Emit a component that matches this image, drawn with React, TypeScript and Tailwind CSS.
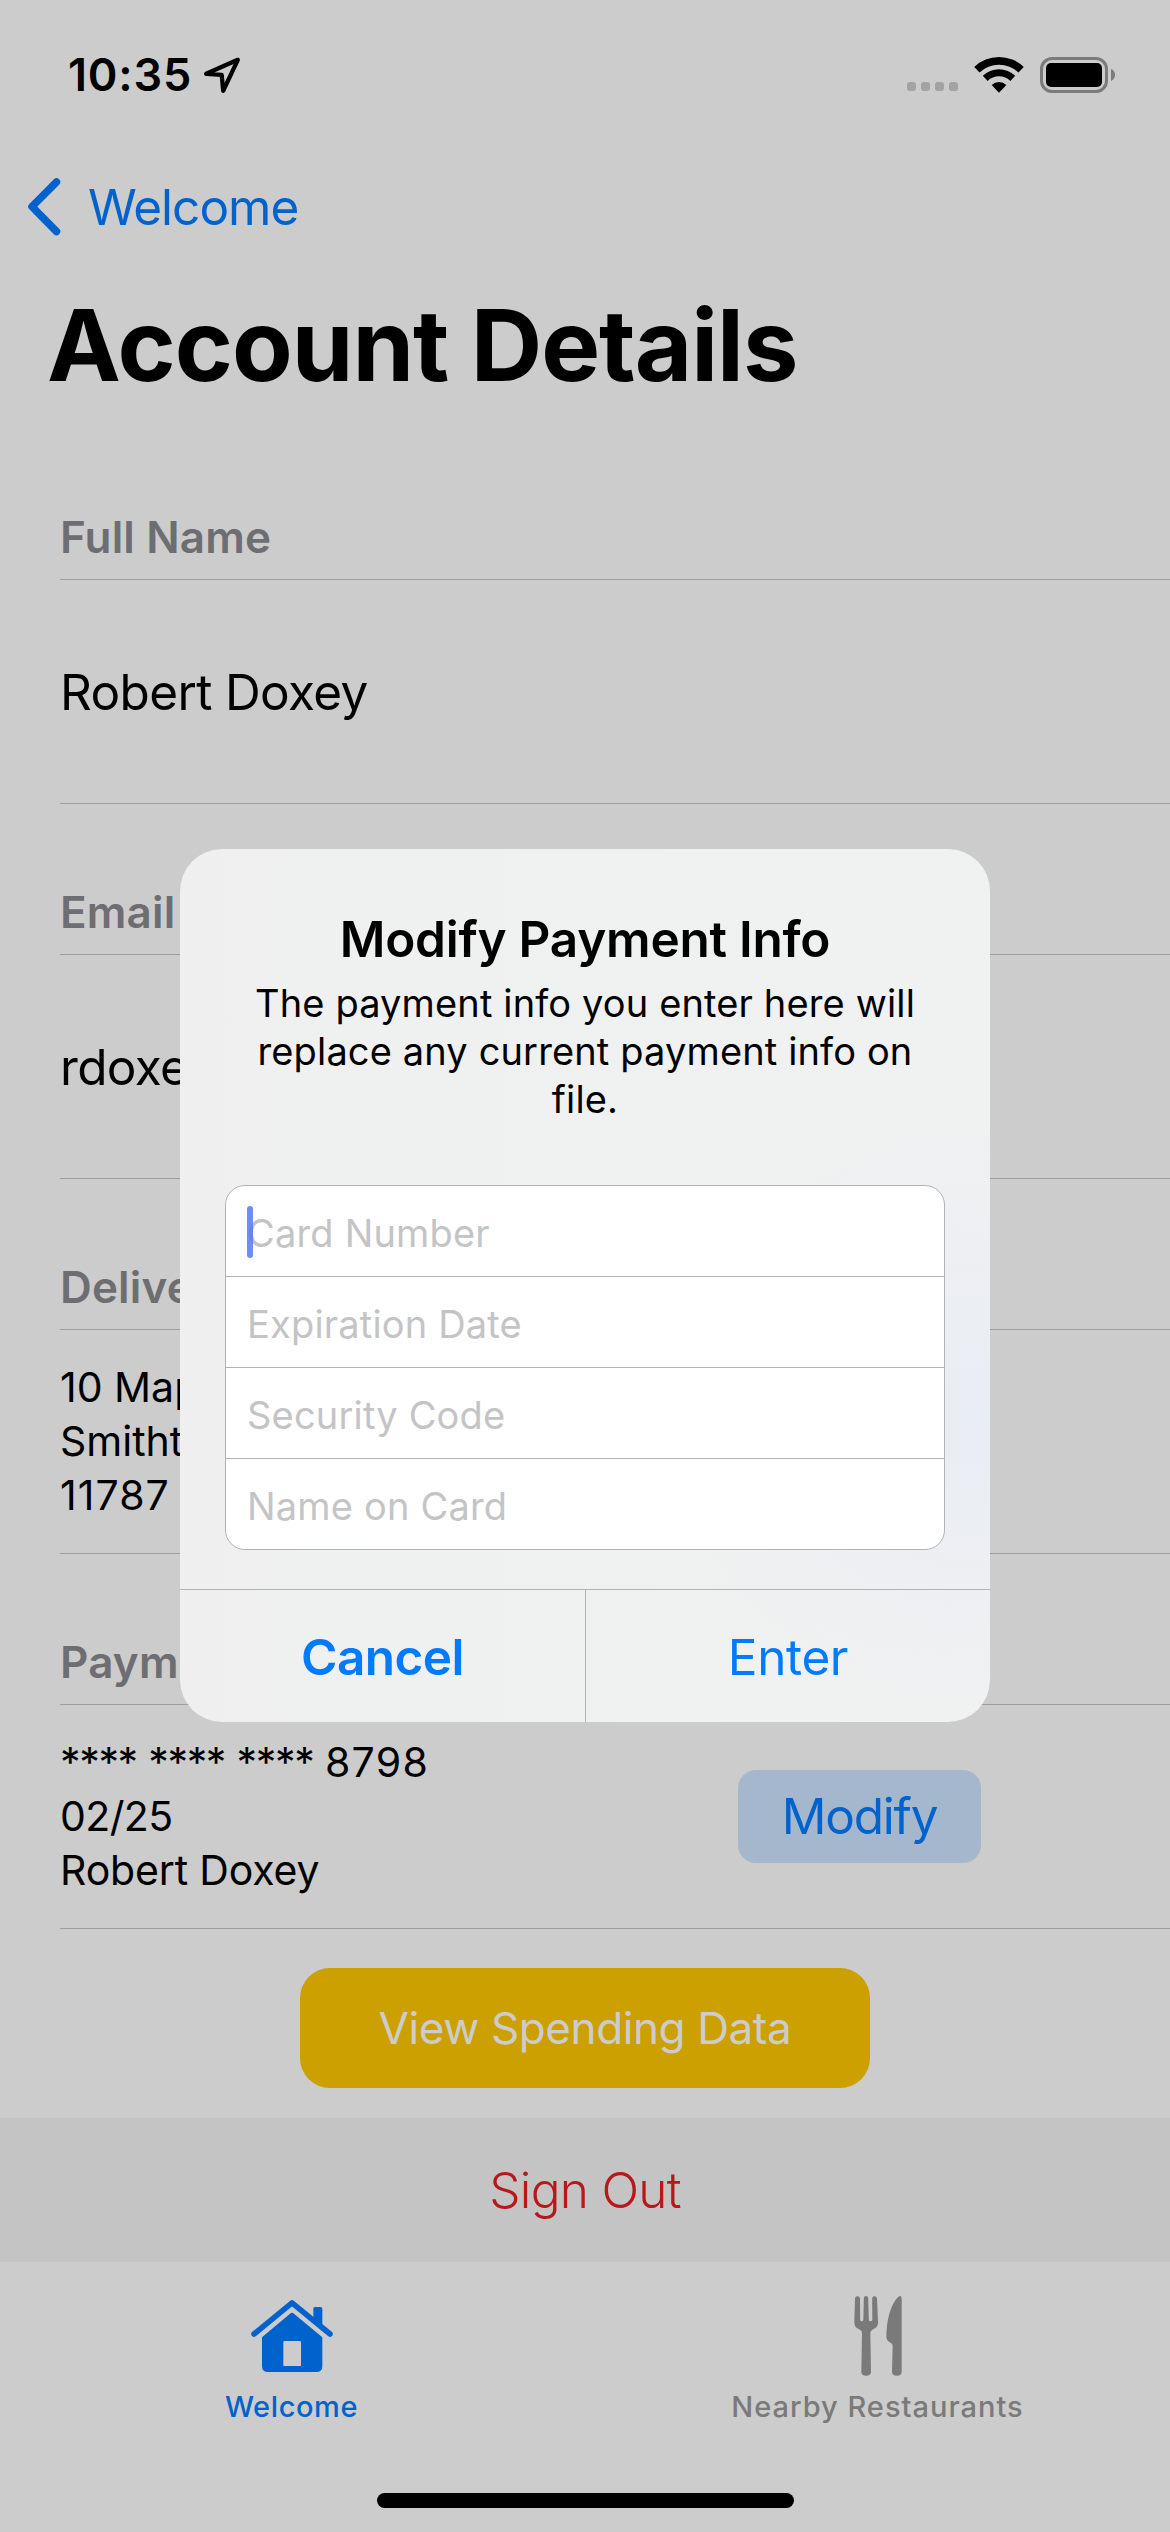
import type { ReactNode } from "react";

function LocationArrow() {
  return (
    <svg width="42" height="40" viewBox="200 55 42 40" fill="none" stroke="#000" strokeWidth="4.3" strokeLinejoin="round">
      <path d="M237.8 59.8 L206.2 73.800 L221.700 74.900 L223.200 90.800 Z" />
    </svg>
  );
}

function WifiIcon() {
  return (
    <svg width="50" height="38" viewBox="372 73 150 114" fill="#000">
      <path d="M372.7 106 A107 107 0 0 1 521.3 106 L505.4 122.6 A84 84 0 0 0 388.6 122.6 Z" />
      <path d="M398.4 132.6 A70 70 0 0 1 495.6 132.6 L481 147.7 A49 49 0 0 0 413 147.7 Z" />
      <path d="M425 160 A32 32 0 0 1 469 160 L447 183 Z" />
    </svg>
  );
}

function BatteryIcon() {
  return (
    <div className="flex items-center gap-[3px]">
      <div className="h-9 w-[68px] rounded-[12px] border-3 border-[#7b7b7b] p-[3px]">
        <div className="h-6 w-14 rounded-[5px] bg-black" />
      </div>
      <svg width="4" height="12" viewBox="0 0 4 12" fill="#7b7b7b">
        <path d="M0 0 C5.4 2 5.4 10 0 12 Z" />
      </svg>
    </div>
  );
}

function StatusBar() {
  return (
    <div className="flex h-[149px] items-center justify-between pr-[55px] pl-[68px]">
      <div className="flex items-center gap-2">
        <span className="text-[45px] leading-none font-semibold tracking-[0.8px]">10:35</span>
        <LocationArrow />
      </div>
      <div className="flex items-center">
        <div className="mt-[24px] mr-[16px] flex gap-[5px]">
          {[0, 1, 2, 3].map((i) => (
            <div key={i} className="size-[9px] rounded-[3px] bg-[#a3a3a3]" />
          ))}
        </div>
        <div className="mr-4">
          <WifiIcon />
        </div>
        <BatteryIcon />
      </div>
    </div>
  );
}

function Section({ title, children, first = false }: { title: string; children: ReactNode; first?: boolean }) {
  return (
    <section className="pl-[60px]">
      <h2
        className={`flex items-end border-b border-[#9d9d9f] pb-[14px] text-[44px] leading-[56px] font-semibold tracking-[0.16px] text-[#6e6e72] ${
          first ? "h-[155px]" : "h-[151px]"
        }`}
      >
        {title}
      </h2>
      <div className="flex h-[224px] items-center border-b border-[#9d9d9f]">{children}</div>
    </section>
  );
}

function MaskedGroup() {
  return <span className="tracking-[-1.35px]">****</span>;
}

function HomeIcon() {
  return (
    <svg width="84" height="74" viewBox="119 87 252 222" fill="#0062cc">
      <path d="M131 192 L245 98.5 L359 192" fill="none" stroke="#0062cc" strokeWidth="16.5" strokeLinecap="round" strokeLinejoin="round" />
      <path d="M309 145 V116 Q309 111 314 111 H331 Q336 111 336 116 V170 Z" />
      <path
        fillRule="evenodd"
        d="M155 202 L239 131 Q245 126 251 131 L336 202 V288 Q336 306 318 306 H173 Q155 306 155 288 Z M223 213 Q219 213 219 217 V288 H272 V217 Q272 213 268 213 Z"
      />
    </svg>
  );
}

function ForkKnifeIcon() {
  return (
    <svg width="50" height="82" viewBox="456 79 150 246" fill="#7a7a7a">
      <path d="M462 89 Q463 83 469.500 83 Q476 83 477 89 L477.500 153 Q478 158 482 158 Q486.500 158 487 153 L488.500 88 Q489 82 495 82 Q501 82 501.500 88 L503.500 153 Q504 158 508.500 158 Q514 158 514 153 L513.500 89 Q514 83 520.500 83 Q527 83 528 89 L531 160 C531 175 524 178 513 184 Q508 187 508 192 L510 309 Q510 321 495.500 321 Q481 321 481 309 L483 192 Q483 187 478 184 C467 178 460 175 460 160 Z" />
      <path d="M592 84 Q602 78 602 90 V309 Q602 321 587.500 321 Q573 321 573 309 L575 232 Q575 227 571 224 L561 217 Q556 213 556 205 C556 155 568 108 592 84 Z" />
    </svg>
  );
}

function TabItem({ label, icon, className }: { label: string; icon: ReactNode; className: string }) {
  return (
    <div className={`flex w-1/2 flex-col items-center text-[29px] leading-9 font-medium ${className}`}>
      <div className="flex h-[82px] items-center">{icon}</div>
      <span className="mt-3">{label}</span>
    </div>
  );
}

function PaymentDialog() {
  const fields = ["Card Number", "Expiration Date", "Security Code", "Name on Card"];
  return (
    <div className="absolute top-[849px] left-[180px] h-[873px] w-[810px] overflow-hidden rounded-[42px] bg-[#f0f1f1] bg-[radial-gradient(ellipse_330px_300px_at_98%_65%,#e9edf4,transparent),linear-gradient(to_right,#efefef,#eff1f0_35%,#f0f1f1)] pt-[60px]">
      <h2 className="text-center text-[49.5px] leading-[60px] font-semibold tracking-[-0.23px]">Modify Payment Info</h2>
      <p className="mt-[10px] text-center text-[38px] leading-[48px] tracking-[0.14px]">
        The payment info you enter here will
        <br />
        replace any current payment info on
        <br />
        file.
      </p>
      <div className="mx-[45px] mt-[62px] divide-y divide-[#b0b3b5] overflow-hidden rounded-[20px] border border-[#b0b3b5] bg-white">
        {fields.map((field, i) => (
          <div
            key={field}
            className={`relative flex items-center pt-1 pl-[21px] text-[38px] tracking-[0.18px] text-[#c4c4c6] ${
              i === fields.length - 1 ? "h-[90px]" : "h-[91px]"
            }`}
          >
            {field}
            {i === 0 && <div className="absolute top-5 left-[21px] h-[52px] w-[6px] rounded-[3px] bg-[#4a72f5]/80" />}
          </div>
        ))}
      </div>
      <div className="mt-[39px] flex h-[133px] border-t border-[#b0b2b3] text-[49.5px] text-[#007aff]">
        <div className="flex w-[405px] items-center justify-center pt-[2px] font-semibold tracking-[-0.52px]">Cancel</div>
        <div className="flex flex-1 items-center justify-center border-l border-[#b0b2b3] pt-[2px] tracking-[-0.39px]">Enter</div>
      </div>
    </div>
  );
}

export default function App() {
  return (
    <div className="relative flex h-[2532px] w-[1170px] flex-col overflow-hidden bg-[#cccccc] font-['Inter',sans-serif] text-black">
      <StatusBar />
      <nav className="flex h-[116px] items-center pl-[25px] text-[49.5px] text-[#0062cc]">
        <svg width="37" height="60" viewBox="26 177 37 60" fill="none" stroke="#0062cc" strokeWidth="7.5" strokeLinecap="round" strokeLinejoin="round">
          <path d="M57.500 182 L33 206.700 L57.500 231.500" />
        </svg>
        <span className="ml-[26px] tracking-[-1px]">Welcome</span>
      </nav>
      <h1 className="flex h-40 items-center pl-[47px] text-[99px] font-bold tracking-[-1.02px]">Account Details</h1>

      <Section title="Full Name" first>
        <span className="mt-px text-[49.5px] tracking-[-0.65px]">Robert Doxey</span>
      </Section>
      <Section title="Email">
        <span className="mt-px text-[49.5px] tracking-[-0.65px]">rdoxe</span>
      </Section>
      <Section title="Delive">
        <div className="mb-[2px] text-[41px] leading-[54px]">
          <p>10 Map</p>
          <p>Smitht</p>
          <p className="tracking-[1.07px]">11787</p>
        </div>
      </Section>
      <Section title="Paym">
        <div className="mb-[2px] flex-1 text-[41px] leading-[54px]">
          <p>
            <MaskedGroup /> <MaskedGroup /> <MaskedGroup /> <span className="tracking-[1.3px]">8798</span>
          </p>
          <p className="tracking-[-0.59px]">02/25</p>
          <p className="tracking-[-0.15px]">Robert Doxey</p>
        </div>
        <button className="mr-[189px] h-[93px] w-[243px] rounded-[18px] bg-[#a4b7cd] text-[49.5px] leading-none tracking-[-1.2px] text-[#0062cc]">
          Modify
        </button>
      </Section>

      <button className="mt-[39px] h-[120px] w-[570px] self-center rounded-[30px] bg-[#cca000] text-[44px] tracking-[-0.39px] text-[#cccccc]">
        View Spending Data
      </button>
      <button className="mt-[30px] h-36 w-full bg-[#c4c4c4] text-[49.5px] font-light tracking-[-0.72px] text-[#b7191b]">Sign Out</button>

      <div className="flex pt-[33px]">
        <TabItem label="Welcome" icon={<HomeIcon />} className="pr-[2px] tracking-[0.6px] text-[#0062cc]" />
        <TabItem label="Nearby Restaurants" icon={<ForkKnifeIcon />} className="tracking-[1px] text-[#7a7a7a]" />
      </div>
      <div className="mt-auto mb-6 h-[15px] w-[417px] self-center rounded-full bg-black" />

      <PaymentDialog />
    </div>
  );
}
